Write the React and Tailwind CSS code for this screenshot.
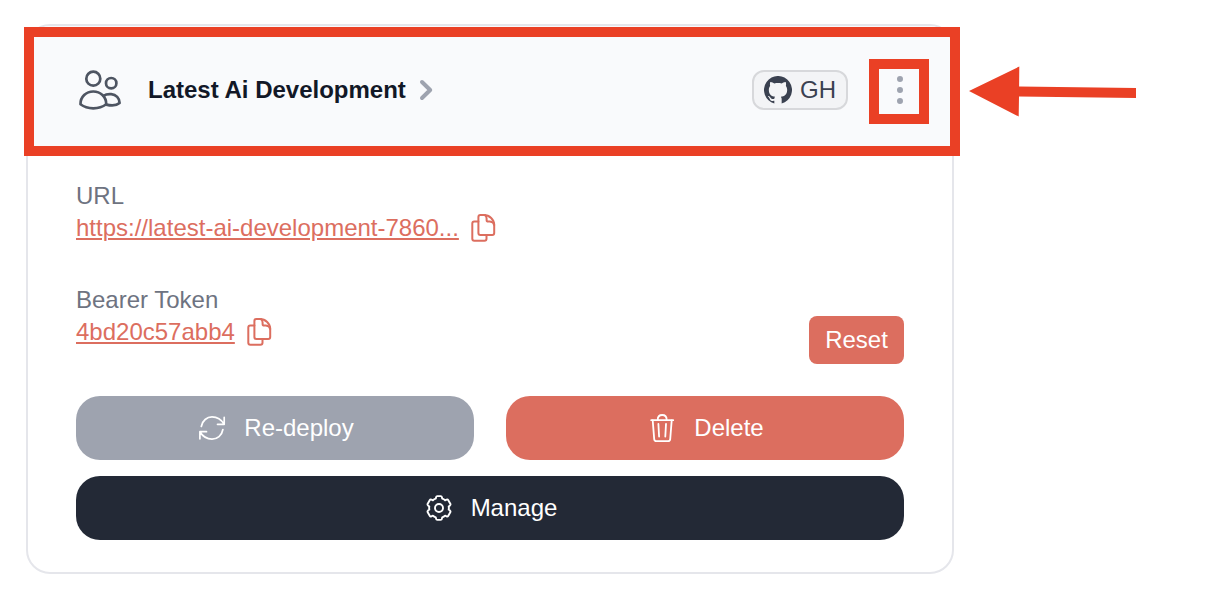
import React from "react";
import { HiMiniEllipsisVertical } from "react-icons/hi2";

function Stroke({ box = 32, width = 2, className, children }) {
  return (
    <svg
      className={className}
      viewBox={`0 0 ${box} ${box}`}
      fill="none"
      stroke="currentColor"
      strokeWidth={width}
      strokeLinecap="round"
      strokeLinejoin="round"
    >
      {children}
    </svg>
  );
}

function UsersIcon({ className }) {
  return (
    <Stroke box={48} width={2.7} className={className}>
      <circle cx="17.3" cy="12.7" r="7" />
      <circle cx="35.2" cy="17.2" r="5.2" />
      <path d="M4.5 38.3C4.3 30.8 10.3 25.5 17.3 25.5S30.4 30.8 30.2 38.3C26.6 41.1 22 42.3 17.3 42.3S8.1 41.1 4.5 38.3Z" />
      <path d="M27.6 29.8C29.6 28.4 32.3 28 35.2 28.2C40 28.5 43.6 32 43.6 37C40.8 39.4 35 39.8 30.3 38.6" />
    </Stroke>
  );
}

function ChevronIcon({ className }) {
  return (
    <Stroke box={40} width={4} className={className}>
      <path d="M16 12L24.2 20L16 28" />
    </Stroke>
  );
}

function GithubIcon({ className }) {
  return (
    <svg className={className} viewBox="0 0 84 84" fill="currentColor">
      <path d="M53 82.5V70C53 66 51.5 64 50.5 62.5C61 61 69.5 56 69.5 42C69.5 36.5 68 33 65.5 30C66.5 26 66.5 22 65 18C61 17.5 56.5 20 53 22.2C46 20.5 38 20.5 31 22.2C27.5 20 23 17.5 19 18C17.5 22 17.5 26 18.5 30C16 33 14.5 36.5 14.5 42C14.5 56 23 61 33.5 62.5C32 64 31.2 66 31 68C27 69.5 22 69 19.5 65C18 62 15 60 12.5 60C11 60.2 12.5 61.5 14 63C16 65 17 68 18 70.5C20 75 26 75.5 31 74.5V82.5A42 42 0 1 1 53 82.5Z" />
    </svg>
  );
}

function CopyIcon({ className }) {
  return (
    <Stroke className={className}>
      <path d="M13.4 3H17C22.5 3 27.2 7.5 27.2 13V20.9a2 2 0 0 1-2 2H13.4a2 2 0 0 1-2-2V5a2 2 0 0 1 2-2Z" />
      <path d="M18 3C19.2 4 19.6 5.2 19.6 6.6V7.9a1.7 1.7 0 0 0 1.7 1.7H22.8C25 9.8 26.8 10.8 27.2 13" />
      <path d="M11.4 9.5H7.3a2 2 0 0 0-2 2V26.8a2 2 0 0 0 2 2H17.5a2 2 0 0 0 2-2V23" />
    </Stroke>
  );
}

function RefreshIcon({ className }) {
  return (
    <Stroke width={1.7} className={className}>
      <path d="M5.3 14.5C6.3 8.6 11 4.9 16 4.9C21.3 4.9 25.6 8 28.2 12.3M28.2 5.4V12.3H21.5" />
      <path d="M26.9 17.5C25.9 23.5 21.2 27.1 16 27.1C10.7 27.1 6.5 24 3.9 19.7M3.9 26.8V19.7H10.5" />
    </Stroke>
  );
}

function TrashIcon({ className }) {
  return (
    <Stroke width={1.8} className={className}>
      <path d="M5.2 8.2H27.2M11.7 8C11.7 4.8 13.3 3 16.2 3S20.7 4.8 20.7 8" />
      <path d="M6.7 8.4L8.2 27.1a2.2 2.2 0 0 0 2.2 2H22a2.2 2.2 0 0 0 2.2-2L25.7 8.4" />
      <path d="M12.4 12L13.1 24.5M20 12L19.3 24.5" />
    </Stroke>
  );
}

function GearIcon({ className }) {
  return (
    <Stroke width={1.9} className={className}>
      <g transform="translate(16 16)">
        <path d="M-1.7 -11.9H1.7Q2.7 -11.9 2.9 -10.9L3.2 -9.4Q5 -8.9 6.1 -7.7L7.6 -8.3Q8.7 -8.7 9.3 -7.7L11.3 -4.3Q11.8 -3.3 11 -2.6L9.7 -1.6Q10 0 9.7 1.6L11 2.6Q11.8 3.3 11.3 4.3L9.3 7.7Q8.7 8.7 7.6 8.3L6.1 7.7Q5 8.9 3.2 9.4L2.9 10.9Q2.7 11.9 1.7 11.9H-1.7Q-2.7 11.9 -2.9 10.9L-3.2 9.4Q-5 8.9 -6.1 7.7L-7.6 8.3Q-8.7 8.7 -9.3 7.7L-11.3 4.3Q-11.8 3.3 -11 2.6L-9.7 1.6Q-10 0 -9.7 -1.6L-11 -2.6Q-11.8 -3.3 -11.3 -4.3L-9.3 -7.7Q-8.7 -8.7 -7.6 -8.3L-6.1 -7.7Q-5 -8.9 -3.2 -9.4L-2.9 -10.9Q-2.7 -11.9 -1.7 -11.9Z" />
        <circle r="4" />
      </g>
    </Stroke>
  );
}

function Field({ label, value }) {
  return (
    <div className="h-16 whitespace-nowrap">
      <div className="text-[24px] leading-8 text-[#6e7381]">{label}</div>
      <div className="flex items-center gap-2 text-[24px] leading-8 text-[#dc6e5f]">
        <a className="underline decoration-2 underline-offset-2">{value}</a>
        <CopyIcon className="size-8 shrink-0" />
      </div>
    </div>
  );
}

function Action({ icon: Icon, label, className }) {
  return (
    <button
      className={
        "flex h-16 items-center justify-center rounded-3xl text-[24px] leading-8 text-white " + className
      }
    >
      <Icon className="mr-4 size-8" />
      <span>{label}</span>
    </button>
  );
}

function Annotations() {
  return (
    <>
      <div className="absolute left-6 top-[27px] h-[129px] w-[936px] border-[10px] border-[#ea4025]" />
      <div className="absolute left-[869px] top-[59px] h-[65px] w-[60px] border-[10px] border-[#ea4025]" />
      <svg className="absolute left-[960px] top-[50px]" width="190" height="80" viewBox="960 50 190 80" fill="#ea4025">
        <path d="M969 91L1019.3 66.5L1019.1 86.4L1136 88V98L1019 96.6L1018.7 116.5Z" />
      </svg>
    </>
  );
}

export default function App() {
  return (
    <div className="relative h-[598px] w-[1216px] overflow-hidden bg-white pl-[26px] pt-6 font-['Liberation_Sans',Arial,sans-serif]">
      <div className="h-[550px] w-[928px] overflow-hidden rounded-3xl border-2 border-[#e5e6eb] bg-white">
        <header className="flex h-32 items-center bg-[#f9fafc] pl-12 pr-8">
          <UsersIcon className="size-12 text-[#4e5562]" />
          <h1 className="ml-6 w-[258px] whitespace-nowrap text-[24px] font-bold leading-8 text-[#121827]">
            Latest Ai Development
          </h1>
          <ChevronIcon className="size-10 text-[#9ea3af]" />
          <div className="ml-auto flex h-10 w-24 items-center gap-2 rounded-xl border-2 border-[#d7d8db] bg-[#f3f4f6] pl-2.5 text-[#3a4150]">
            <GithubIcon className="size-7" />
            <span className="text-[24px] leading-8">GH</span>
          </div>
          <HiMiniEllipsisVertical className="ml-8 size-10 text-[#9ea3af]" />
        </header>
        <main className="px-12 pt-[26px]">
          <Field label="URL" value="https://latest-ai-development-7860..." />
          <div className="mt-10 flex h-20 items-end justify-between">
            <div className="self-start">
              <Field label="Bearer Token" value="4bd20c57abb4" />
            </div>
            <button className="h-12 w-[95px] rounded-lg bg-[#dc6e5f] text-[24px] leading-8 text-white">Reset</button>
          </div>
          <div className="mt-8 grid grid-cols-2 gap-x-8 gap-y-4">
            <Action icon={RefreshIcon} label="Re-deploy" className="bg-[#9ea3af]" />
            <Action icon={TrashIcon} label="Delete" className="bg-[#dc6e5f]" />
            <Action icon={GearIcon} label="Manage" className="col-span-2 bg-[#232936]" />
          </div>
        </main>
      </div>
      <Annotations />
    </div>
  );
}
